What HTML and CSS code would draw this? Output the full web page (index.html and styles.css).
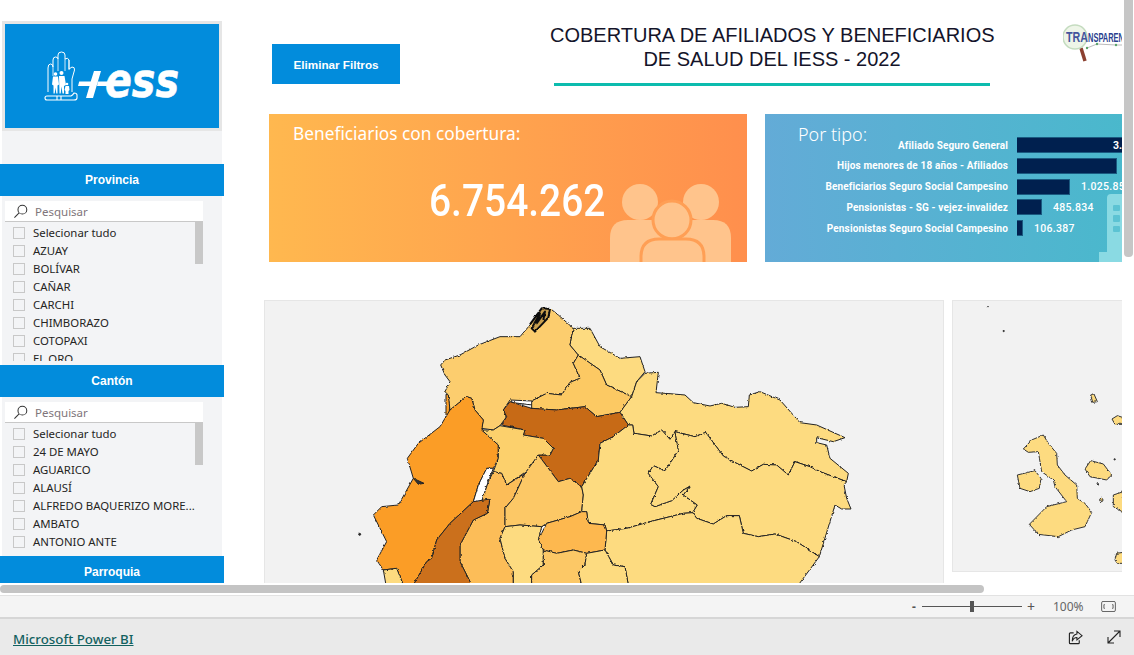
FILE: index.html
```html
<!DOCTYPE html>
<html lang="es">
<head>
<meta charset="utf-8">
<title>Cobertura IESS</title>
<link rel="stylesheet" href="styles.css">
</head>
<body>
<div class="app">
  <div class="viewport">
    <div class="content">
      <aside class="sidebar">
        <div class="logo-box">
          <svg class="hand" viewBox="0 0 34 50" width="34" height="50">
            <path d="M4 41V17q0-4 2.500-4T9 16V9q0-3 2.500-3T14 8V4q0-3 3.500-3T21 4v4q3-2 4 1v9l3-2q3 0 2.500 3L28 28v13" fill="none" stroke="#fff" stroke-width="1"/>
            <path d="M9 16v9M14 8v12M21 8v12M25 9v10" stroke="#fff" stroke-width=".8" fill="none"/>
            <g fill="#fff">
              <circle cx="11.500" cy="23" r="1.800"/><path d="M9 25.500h5l1 8-1.500 1v8h-1.200l-.8-6-.8 6H9.500v-8L8 33.500z"/>
              <circle cx="17.500" cy="22" r="2"/><path d="M15 25h5.500l1.500 9-2 1v7.500h-1.500l-1-7-.8 7h-1.200z"/>
              <circle cx="23" cy="33" r="1.300"/><path d="M21.500 35h3.500l.5 4-1 1v3h-3v-3l-1-1z"/>
            </g>
            <path d="M1 47q0-2 2-2h24q2-1 3-3 3 0 3 2v3q0 2-3 2H3q-2 0-2-2zM13 45v4M17 45v4" fill="none" stroke="#fff" stroke-width="1.100"/>
          </svg>
          <svg class="iess" viewBox="0 0 102 32" width="102" height="32" role="img" aria-label="IESS">
            <path d="M16 2h7L15 29H8l3.500-12H0l1.200-4.500h11.500z M20 12.500h12L31 17H19z" fill="#fff"/>
            <text x="27" y="28" textLength="74" lengthAdjust="spacingAndGlyphs" class="iess-text">ess</text>
          </svg>
        </div>
        <section class="slicer slicer-first">
          <h2 class="slicer-head">Provincia</h2>
          <div class="search">
            <svg class="search-icon" viewBox="0 0 16 16" width="15" height="15"><circle cx="10" cy="6" r="4.700" fill="none" stroke="#333" stroke-width="1.100"/><path d="M6.500 9.500 1.500 14.500" stroke="#333" stroke-width="1.100"/></svg>
            <span>Pesquisar</span>
          </div>
          <div class="list list-a">
            <div class="thumb"></div>
            <div class="row"><i class="box"></i>Selecionar tudo</div>
            <div class="row"><i class="box"></i>AZUAY</div>
            <div class="row"><i class="box"></i>BOLÍVAR</div>
            <div class="row"><i class="box"></i>CAÑAR</div>
            <div class="row"><i class="box"></i>CARCHI</div>
            <div class="row"><i class="box"></i>CHIMBORAZO</div>
            <div class="row"><i class="box"></i>COTOPAXI</div>
            <div class="row"><i class="box"></i>EL ORO</div>
          </div>
        </section>
        <section class="slicer">
          <h2 class="slicer-head">Cantón</h2>
          <div class="search">
            <svg class="search-icon" viewBox="0 0 16 16" width="15" height="15"><circle cx="10" cy="6" r="4.700" fill="none" stroke="#333" stroke-width="1.100"/><path d="M6.500 9.500 1.500 14.500" stroke="#333" stroke-width="1.100"/></svg>
            <span>Pesquisar</span>
          </div>
          <div class="list list-b">
            <div class="thumb"></div>
            <div class="row"><i class="box"></i>Selecionar tudo</div>
            <div class="row"><i class="box"></i>24 DE MAYO</div>
            <div class="row"><i class="box"></i>AGUARICO</div>
            <div class="row"><i class="box"></i>ALAUSÍ</div>
            <div class="row"><i class="box"></i>ALFREDO BAQUERIZO MORE...</div>
            <div class="row"><i class="box"></i>AMBATO</div>
            <div class="row"><i class="box"></i>ANTONIO ANTE</div>
          </div>
        </section>
        <section class="slicer">
          <h2 class="slicer-head">Parroquia</h2>
        </section>
      </aside>
      <main class="report">
        <header class="top">
          <button class="clear">Eliminar Filtros</button>
          <div class="title-wrap">
            <h1 class="title">COBERTURA DE AFILIADOS Y BENEFICIARIOS<br>DE SALUD DEL IESS - 2022</h1>
            <div class="rule"></div>
          </div>
          <svg class="transp" viewBox="0 0 59 44" width="59" height="44">
            <path d="M18 28 22 41" stroke="#8c4030" stroke-width="3.500"/>
            <circle cx="12" cy="17" r="12" fill="#eef5e8" stroke="#c5dcc0" stroke-width="1.600"/>
            <text x="3" y="22" textLength="22" lengthAdjust="spacingAndGlyphs" class="tr-big">TRA</text>
            <text x="25" y="22" textLength="36" lengthAdjust="spacingAndGlyphs" class="tr-small">NSPAREN</text>
            <path d="M24 28 34 24 53 25 59 25" stroke="#aaa" stroke-width=".8" fill="none"/>
            <circle cx="24" cy="28" r="1.200" fill="#5aa36a"/><circle cx="34" cy="24" r="1.200" fill="#5aa36a"/><circle cx="53" cy="25" r="1.200" fill="#5aa36a"/>
          </svg>
        </header>
        <div class="cards">
          <section class="card card-orange">
            <h3 class="card-title card-title-a">Beneficiarios con cobertura:</h3>
            <div class="big"><span>6.754.262</span></div>
            <svg class="people" viewBox="0 -10 122 80" width="122" height="80">
              <circle cx="30" cy="10" r="18"/><circle cx="91" cy="10" r="18"/>
              <path d="M0 70V46q0-18 18-18h85q18 0 18 18v24z"/>
              <circle cx="62" cy="28" r="19" class="ring"/>
              <path d="M31 72V65q0-18 18-18h27q18 0 18 18v7z" class="ring"/>
            </svg>
          </section>
          <section class="card card-blue">
            <svg class="building" viewBox="0 0 23 68" width="23" height="68"><path d="M8 4q0-4 4-4h11v68H0V58h8z" fill="#8adae3"/><rect x="14" y="11" width="7" height="6" rx="1" fill="#5cc3d3"/><rect x="14" y="21" width="7" height="7" rx="1" fill="#5cc3d3"/><rect x="14" y="32" width="7" height="6" rx="1" fill="#5cc3d3"/></svg>
            <h3 class="card-title card-title-b">Por tipo:</h3>
            <div class="bars">
              <div class="bar-row"><span class="bar-label">Afiliado Seguro General</span><span class="bar bar-1"></span><span class="bar-in">3.</span></div>
              <div class="bar-row"><span class="bar-label">Hijos menores de 18 años - Afiliados</span><span class="bar bar-2"></span></div>
              <div class="bar-row"><span class="bar-label">Beneficiarios Seguro Social Campesino</span><span class="bar bar-3"></span><span class="bar-val">1.025.85</span></div>
              <div class="bar-row"><span class="bar-label">Pensionistas - SG - vejez-invalidez</span><span class="bar bar-4"></span><span class="bar-val">485.834</span></div>
              <div class="bar-row"><span class="bar-label">Pensionistas Seguro Social Campesino</span><span class="bar bar-5"></span><span class="bar-val">106.387</span></div>
            </div>
          </section>
        </div>
        <div class="maps">
          <section class="map map-main">
            <svg viewBox="264 300 680 290" width="680" height="290">
              <defs>
                <filter id="rough" x="-5%" y="-5%" width="110%" height="110%">
                  <feTurbulence type="fractalNoise" baseFrequency="0.28" numOctaves="3" seed="4" result="n"/>
                  <feDisplacementMap in="SourceGraphic" in2="n" scale="2.600" xChannelSelector="R" yChannelSelector="G"/>
                </filter>
              </defs>
              <g filter="url(#rough)">
              <g transform="translate(350 295) scale(.33333)" stroke="#222" stroke-width="3" stroke-linejoin="round">
                <polygon fill="#fff" points="480,312 565,306 548,330 480,322"/>
                <polygon fill="#fb9d27" points="288,298 300,300 298,350 288,368"/>
                <polygon fill="#fccd6e" points="272,210 285,195 330,180 385,150 450,125 510,125 540,90 575,45 600,40 625,60 670,100 660,150 685,180 670,205 690,250 660,262 635,300 590,295 545,318 480,315 460,345 470,365 450,392 430,405 395,400 400,375 375,345 365,310 350,305 325,325 300,345 295,300 285,290 300,260 285,240"/>
                <polygon fill="#fddb80" points="670,100 720,100 750,155 810,190 870,185 885,230 860,260 845,305 770,270 750,225 685,180 660,150"/>
                <polygon fill="#fcc964" points="685,180 750,225 770,270 845,305 810,352 740,365 705,335 620,345 545,340 545,318 590,295 635,300 660,262 690,250 670,205"/>
                <polygon fill="#fddb80" points="885,235 925,232 918,293 945,295 1005,300 1030,323 1080,333 1115,325 1155,337 1195,335 1198,300 1230,290 1290,315 1350,383 1400,390 1485,428 1450,440 1400,428 1400,443 1430,450 1440,490 1495,535 1490,560 1410,530 1380,515 1335,500 1315,540 1280,510 1240,508 1205,528 1150,500 1120,483 1067,412 1035,425 975,410 960,433 935,405 905,423 852,415 848,390 835,390 810,352 845,305 860,260"/>
                <polygon fill="#c76a19" points="480,320 545,340 620,345 705,335 740,365 810,352 835,390 790,425 750,445 745,495 695,575 660,550 625,560 565,480 600,480 610,460 580,430 520,420 525,405 455,390 470,365 460,345"/>
                <polygon fill="#fb9d27" points="350,305 365,310 375,345 400,375 395,405 445,450 445,490 430,520 410,520 385,570 370,620 300,685 260,735 245,790 230,800 190,870 160,870 140,820 100,825 80,795 110,740 70,660 95,635 145,630 190,550 172,490 205,445 270,395 300,345 325,325"/>
                <polygon fill="#fff" points="410,520 430,520 415,560 395,620 370,620 385,570"/>
                <polygon fill="#fcd06c" points="395,405 430,405 450,392 525,405 520,420 580,430 610,460 600,480 565,480 535,525 470,570 455,535 430,530 445,490 445,450"/>
                <polygon fill="#fcbd58" points="430,530 455,535 470,570 525,535 490,610 465,640 465,695 450,730 465,790 490,830 490,870 365,870 330,800 330,750 370,675 412,655 420,612 395,620 415,560"/>
                <polygon fill="#cb701b" points="370,620 420,612 412,655 370,675 330,750 330,800 365,870 190,870 230,800 245,790 260,735 300,685"/>
                <polygon fill="#fcc866" points="565,480 625,560 660,550 695,575 700,600 695,650 660,665 590,685 575,695 510,690 465,695 465,640 490,610 525,535"/>
                <polygon fill="#fddb80" points="750,445 790,425 835,390 848,390 852,415 905,423 935,405 960,433 975,410 985,465 970,490 945,527 910,512 895,535 925,575 902,628 915,635 965,617 1000,585 1020,573 1000,600 1042,630 1028,653 1000,655 900,680 830,700 770,708 765,690 715,685 710,650 695,650 700,600 695,575 745,495"/>
                <polygon fill="#fddb80" points="975,410 1035,425 1067,412 1120,483 1150,500 1205,528 1240,508 1280,510 1315,540 1335,500 1380,515 1410,530 1490,560 1482,570 1490,610 1503,642 1475,642 1455,630 1408,785 1340,740 1275,717 1225,725 1180,715 1168,662 1130,662 1090,687 1040,670 1028,653 1042,630 1000,600 1020,573 1000,585 965,617 915,635 902,628 925,575 895,535 910,512 945,527 970,490 985,465"/>
                <polygon fill="#fddb80" points="770,708 830,700 900,680 1000,655 1028,653 1040,670 1090,687 1130,662 1168,662 1180,715 1225,725 1275,717 1340,740 1408,785 1345,870 835,870 825,815 790,810 765,765"/>
                <polygon fill="#fdb84f" points="715,685 765,690 770,708 765,765 710,775 670,765 620,775 580,765 565,735 590,685 660,665 695,650 710,650"/>
                <polygon fill="#fddb80" points="465,695 510,690 575,695 565,735 580,765 580,810 545,840 545,870 490,870 490,830 465,790 450,730"/>
                <polygon fill="#fcc866" points="580,765 620,775 670,765 710,775 705,810 685,830 695,870 545,870 545,840 580,810"/>
                <polygon fill="#fddb80" points="710,775 765,765 790,810 825,815 835,870 695,870 685,830 705,810"/>
                <polygon fill="#fddb80" points="100,825 140,820 160,870 108,870"/>
                <path d="M190 550 222 565 205 568z" fill="#333"/>
                <circle cx="29" cy="718" r="3" fill="#333"/>
                <path d="M540 88 575 40 600 42 595 68 555 110 545 100 570 55 560 85 585 50 580 75" fill="#c9a050" stroke="#111" stroke-width="6"/>
              </g>
              </g>
            </svg>
          </section>
          <section class="map map-side">
            <svg viewBox="952 300 200 272" width="200" height="272">
              <g filter="url(#rough)">
              <g transform="translate(940 295) scale(.33333)" stroke="#333" stroke-width="3" fill="#fddb80" stroke-linejoin="round">
                <path d="M250 462 275 435 310 420 325 445 350 475 352 510 375 540 410 570 412 610 435 625 455 652 435 695 395 705 355 725 295 718 268 688 320 635 380 620 345 575 340 555 305 530 295 470 265 472z"/>
                <path d="M232 540 285 527 303 550 298 580 270 590 240 580z"/>
                <path d="M435 522 452 497 490 507 515 540 500 555 450 545z"/>
                <path d="M452 300 462 297 472 320 458 322z"/>
                <path d="M516 372 532 362 550 368 550 388 525 388z"/>
                <path d="M520 600 550 590 550 652 520 635z"/>
                <path d="M525 795 530 775 550 772 550 805 532 805z"/>
                <circle cx="484" cy="615" r="5"/>
                <circle cx="473" cy="565" r="2" fill="#333"/>
                <circle cx="524" cy="493" r="2" fill="#333"/>
                <circle cx="144" cy="35" r="1" fill="#222"/>
                <circle cx="191" cy="108" r="2" fill="#222"/>
              </g>
              </g>
            </svg>
          </section>
        </div>
      </main>
    </div>
    <div class="hscroll"></div>
    <div class="vscroll"></div>
  </div>
  <div class="zoombar">
    <span class="zm">-</span>
    <div class="track"><span class="knob"></span></div>
    <span class="zp">+</span>
    <span class="zv">100%</span>
    <svg class="fit" viewBox="0 0 16 12" width="15" height="11"><rect x=".5" y=".5" width="15" height="11" rx="1.500" fill="none" stroke="#555"/><path d="M4 4H3v4h1M12 4h1v4h-1" fill="none" stroke="#555"/></svg>
  </div>
  <footer class="foot">
    <a class="brand" href="#">Microsoft Power BI</a>
    <svg class="share" viewBox="0 0 16 16" width="15" height="15"><path d="M6 3H2.500Q1.500 3 1.500 4v9.500q0 1 1 1H11q1 0 1-1V11" fill="none" stroke="#222" stroke-width="1.200"/><path d="M9.500 1.500 15 6l-5.500 4.500V8Q6 8 4.500 12 4.500 5 9.500 4.300z" fill="none" stroke="#222" stroke-width="1.100"/></svg>
    <svg class="expand" viewBox="0 0 14 14" width="14" height="14"><path d="M1 13 13 1M7 1h6v6M1 7v6h6" fill="none" stroke="#222" stroke-width="1.100"/></svg>
  </footer>
</div>
</body>
</html>
```
FILE: styles.css
```css
* { box-sizing: border-box; }
html, body { margin: 0; padding: 0; height: 100%; background: #fff; overflow: hidden; }
body { font-family: "Open Sans", "Noto Sans", sans-serif; color: #252423; }
.app { display: flex; flex-direction: column; width: 1134px; height: 655px; }
.viewport { position: relative; height: 595px; flex: none; }
.content { display: flex; width: 1122px; height: 583px; overflow: hidden; }

.sidebar { width: 224px; flex: none; padding-top: 21px; display: flex; flex-direction: column; position: relative; }
.sidebar::before { content: ""; position: absolute; left: 2px; right: 2px; top: 21px; bottom: 0; background: #f3f4f6; }
.logo-box { position: relative; flex: none; margin: 0 2px; height: 110px; border: 3px solid #e6e6e6; background: #028cdc; display: flex; align-items: center; padding-left: 39px; }
.hand { flex: none; }
.iess { margin-left: 0; margin-top: 18px; flex: none; }
.iess-text { font-family: "DejaVu Sans", sans-serif; font-weight: 700; font-style: italic; font-size: 48px; fill: #fff; stroke: #fff; stroke-width: .6px; }

.slicer { position: relative; flex: none; display: flex; flex-direction: column; }
.slicer-first { margin-top: 33px; }
.slicer-head { margin: 0; height: 32px; line-height: 33px; background: #028cdc; color: #fff; font-family: "Liberation Sans", sans-serif; font-size: 12px; font-weight: 700; text-align: center; }
.search { margin: 5px 21px 0 5px; height: 21px; background: #fff; border-bottom: 1px solid #c8c8c8; display: flex; align-items: center; padding-left: 8px; font-family: "Noto Sans", sans-serif; font-size: 11.500px; color: #80757a; gap: 7px; }
.search-icon { flex: none; }
.list { position: relative; margin: 0 21px 0 5px; overflow: hidden; font-family: "Noto Sans", sans-serif; font-size: 11.400px; color: #252423; }
.list-a { height: 139px; margin-bottom: 4px; }
.list-b { height: 133px; }
.thumb { position: absolute; right: 0; top: 0; width: 8px; height: 42px; background: #c8c8c8; }
.row { height: 18px; display: flex; align-items: center; padding-left: 8px; white-space: nowrap; line-height: 18px; position: relative; top: 2px; }
.box { width: 12px; height: 12px; border: 1px solid #c8c8c8; margin-right: 8px; flex: none; }

.report { flex: 1; min-width: 0; }
.top { display: flex; height: 114px; }
.clear { width: 128px; height: 40px; margin: 44px 0 0 48px; background: #028cdc; color: #fff; border: 0; font-family: "Liberation Sans", sans-serif; font-weight: 700; font-size: 11.700px; flex: none; padding: 0; }
.title-wrap { width: 436px; margin-left: 154px; margin-top: 23px; flex: none; }
.title { margin: 0 -4px; font-family: "Liberation Sans", sans-serif; font-weight: 400; font-size: 20px; line-height: 24px; color: #14142a; text-align: center; white-space: nowrap; }
.rule { height: 3px; background: #0cbcae; margin-top: 12px; }
.transp { flex: none; margin: 20px 0 0 73px; }
.tr-big { font-family: "Liberation Sans", sans-serif; font-weight: 700; font-size: 14px; fill: #44559c; }
.tr-small { font-family: "Liberation Sans", sans-serif; font-weight: 700; font-size: 12px; fill: #2a3f8f; }

.cards { display: flex; gap: 18px; margin-left: 45px; height: 148px; }
.card { position: relative; height: 148px; flex: none; overflow: hidden; }
.card-orange { width: 478px; background: linear-gradient(90deg, #ffb84f, #ff8f4d); }
.card-blue { width: 400px; background: linear-gradient(90deg, #63abd7 0%, #47bacb 100%); }
.card-title { margin: 0; font-family: "Noto Sans", sans-serif; font-weight: 400; color: #fff; position: relative; }
.card-title-a { font-size: 17.300px; padding: 8px 0 0 24px; line-height: 24px; }
.card-title-b { font-size: 18px; font-weight: 300; padding: 7px 0 0 33px; line-height: 26px; }
.big { position: absolute; left: 160px; top: 61px; font-family: Roboto, sans-serif; font-size: 45px; font-weight: 500; line-height: 52px; color: #fff; white-space: nowrap; }
.big span { display: inline-block; transform: scaleX(.865); transform-origin: left center; }
.people { position: absolute; left: 341px; bottom: 0; fill: #ffc48c; }
.ring { stroke: #ff9f55; stroke-width: 3; fill: #ffc48c; }
.building { position: absolute; left: 334px; bottom: 0; }
.bars { position: absolute; left: 0; top: 23px; display: flex; flex-direction: column; gap: 4.800px; }
.bar-row { display: flex; align-items: center; height: 16px; position: relative; }
.bar-label { width: 243px; text-align: right; font-family: Roboto, sans-serif; font-weight: 700; font-size: 10px; color: #fff; white-space: nowrap; letter-spacing: .15px; }
.bar { height: 16px; margin-left: 9px; background: #00204f; border: 1px solid #1a5a80; border-left: 0; flex: none; }
.bar-1 { width: 120px; }
.bar-2 { width: 100px; }
.bar-3 { width: 53px; }
.bar-4 { width: 25px; }
.bar-5 { width: 6px; }
.bar-val { margin-left: 11px; font-family: Roboto, sans-serif; font-weight: 500; font-size: 10.500px; letter-spacing: .3px; color: #fff; white-space: nowrap; }
.bar-in { position: absolute; left: 348px; font-family: Roboto, sans-serif; font-weight: 700; font-size: 10.500px; color: #fff; }

.maps { display: flex; gap: 8px; margin: 38px 0 0 40px; align-items: flex-start; }
.map { flex: none; background: #f2f2f2; border: 1px solid #e6e6e6; overflow: hidden; }
.map svg { display: block; margin: -1px; }
.map-main { width: 680px; height: 290px; }
.map-side { width: 200px; height: 272px; }

.hscroll { position: absolute; left: 0; top: 585px; width: 984px; height: 8px; border-radius: 4px; background: #c4c4c4; }
.vscroll { position: absolute; left: 1124px; top: 0; width: 9px; height: 257px; border-radius: 0 0 4px 4px; background: #c6c6c6; }

.zoombar { height: 24px; flex: none; background: #f4f4f4; border-top: 1px solid #e2e2e2; border-bottom: 2px solid #d6d6d6; display: flex; align-items: center; color: #555; font-family: "Noto Sans", sans-serif; font-size: 12px; padding-left: 912px; }
.zm { width: 10px; font-weight: 700; }
.track { position: relative; width: 100px; height: 1px; background: #555; }
.knob { position: absolute; left: 48px; top: -5px; width: 4px; height: 11px; background: #555; }
.zp { margin-left: 5px; width: 26px; font-size: 14px; }
.zv { width: 48px; font-size: 12px; color: #666; }
.fit { flex: none; }

.foot { flex: 1; background: #eaeaea; display: flex; align-items: center; padding-left: 13px; position: relative; }
.brand { font-family: "Noto Sans", sans-serif; font-size: 13.300px; font-weight: 500; color: #12615f; text-decoration: underline; position: relative; top: 2px; }
.share { margin-left: auto; }
.expand { margin: 0 13px 0 24px; }
```
